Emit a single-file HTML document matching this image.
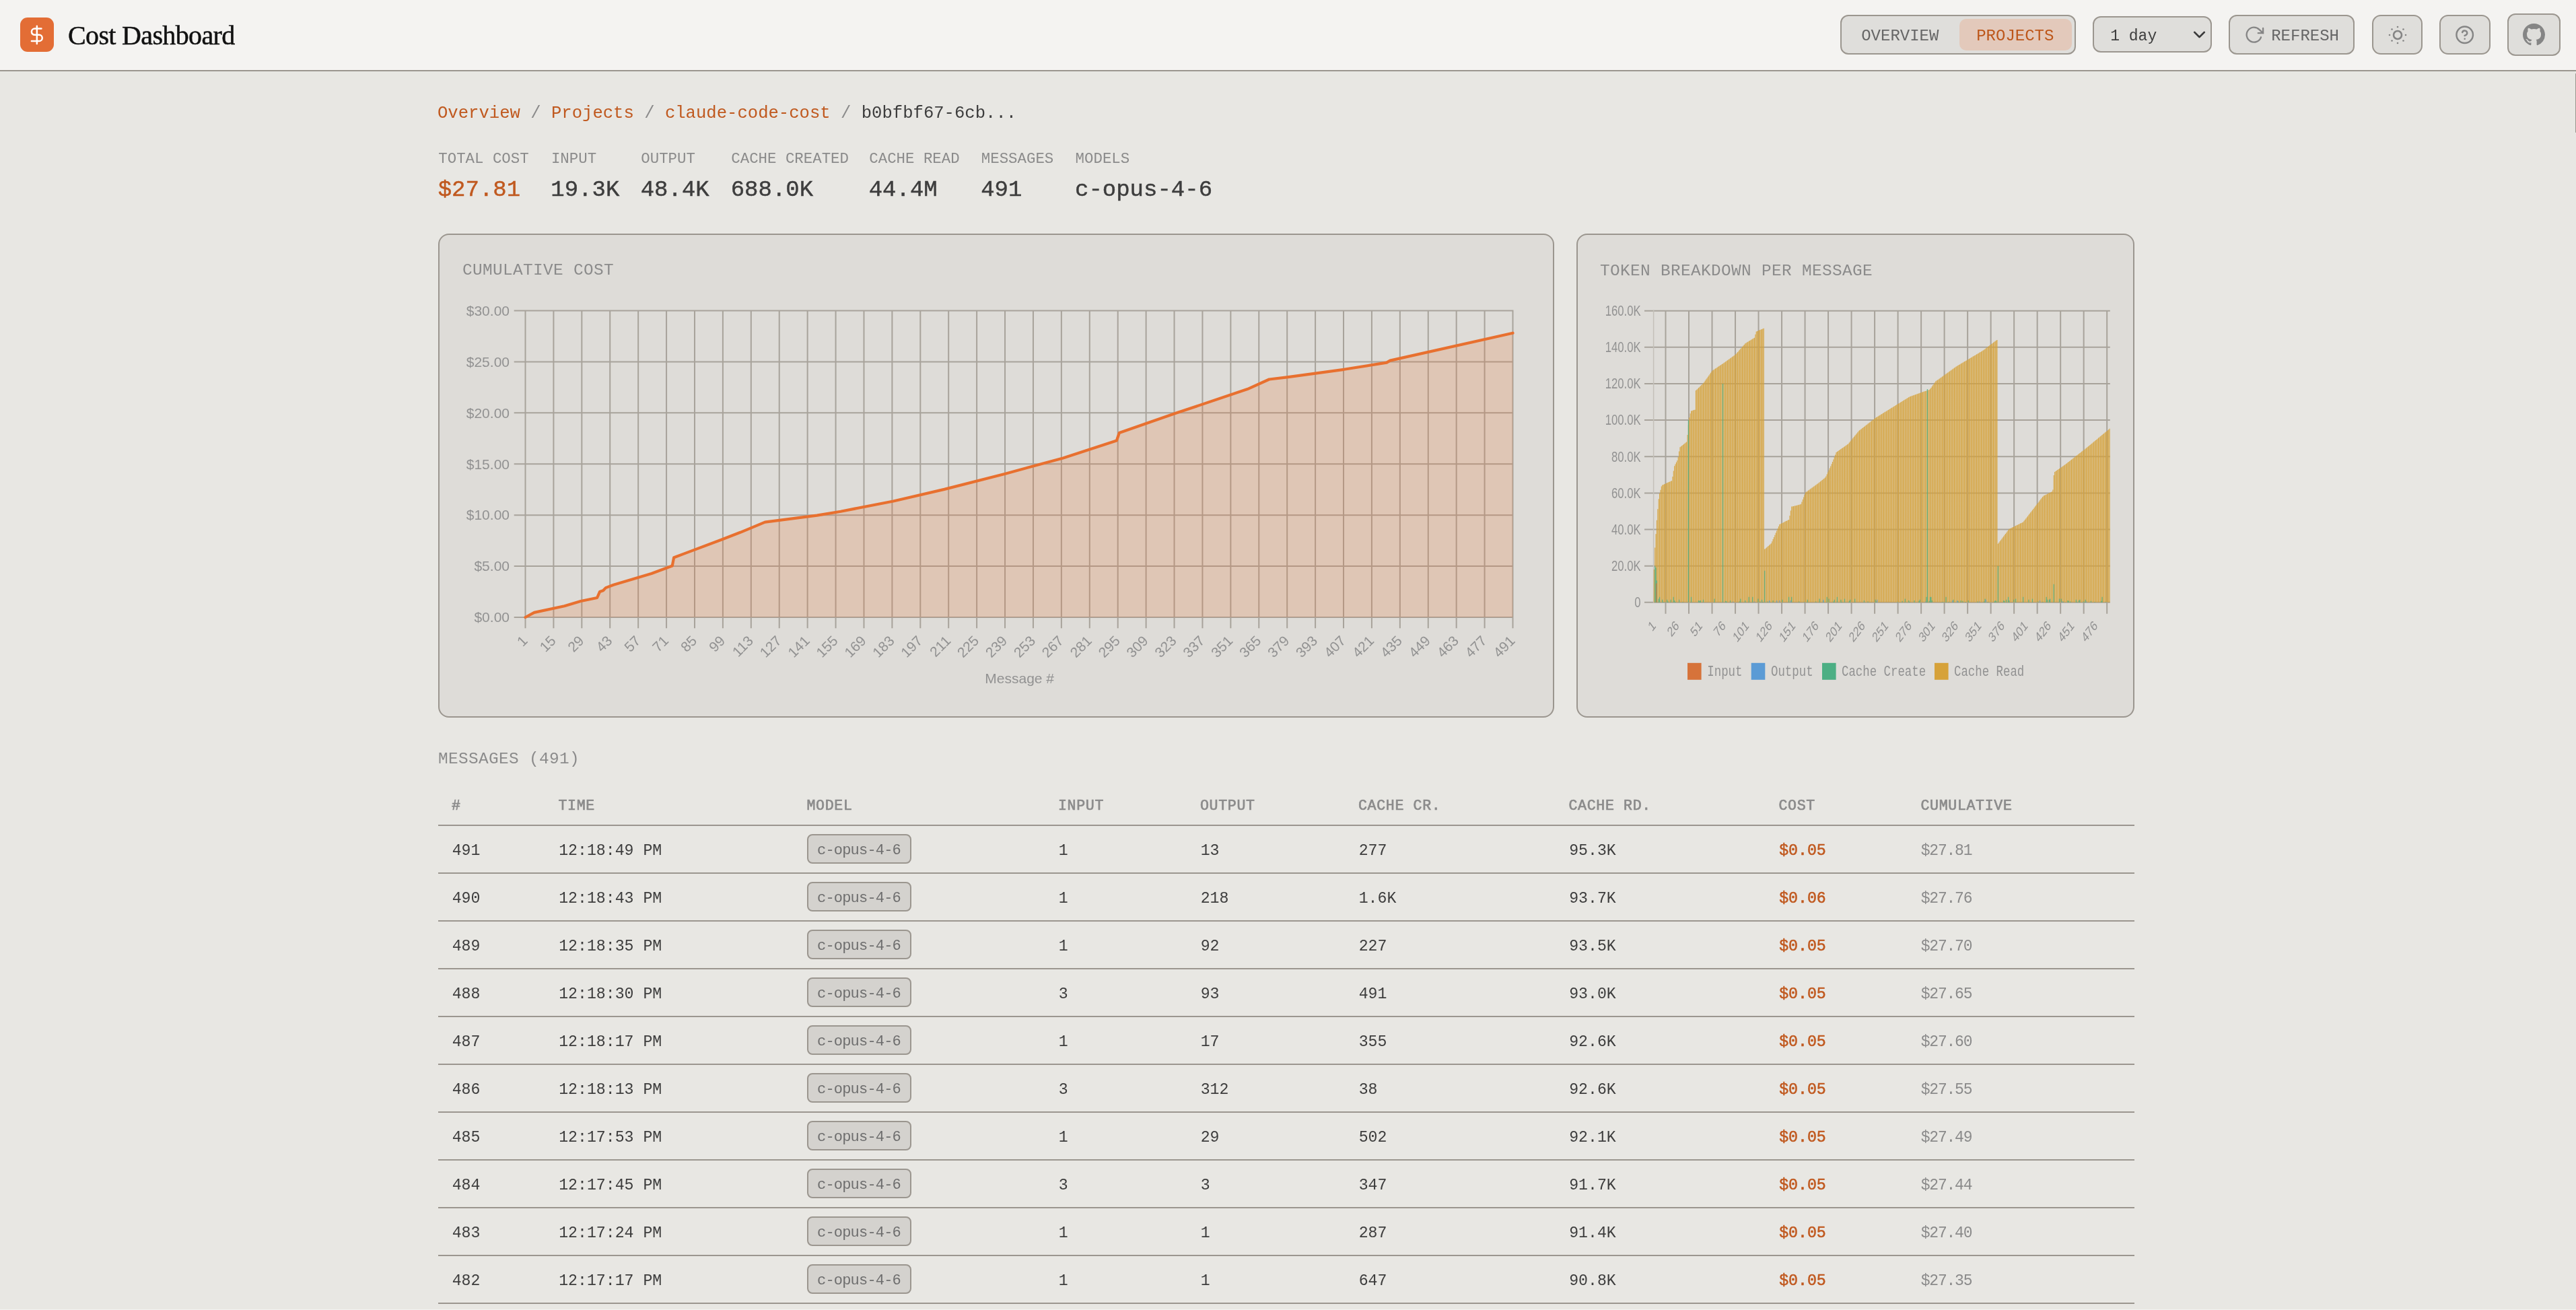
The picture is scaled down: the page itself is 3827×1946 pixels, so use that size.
<!DOCTYPE html><html><head><meta charset="utf-8"><style>
html,body{margin:0;padding:0;}
body{width:3827px;height:1946px;overflow:hidden;position:relative;background:#e8e7e3;}
.t{position:absolute;white-space:pre;}
.r{position:absolute;box-sizing:border-box;}
svg{position:absolute;overflow:visible;}
</style></head><body><div id="wrap" style="position:absolute;left:0;top:0;width:3827px;height:1946px;will-change:transform">
<div class="r" style="left:0px;top:0px;width:3827px;height:106px;background:#f4f3f1;border-radius:0px;"></div>
<div class="r" style="left:0px;top:104px;width:3827px;height:2px;background:#9b968f;border-radius:0px;"></div>
<div class="r" style="left:30px;top:26px;width:50px;height:51px;background:#e36d35;border-radius:11px;"></div>
<svg style="left:38.7px;top:35.7px" width="31.7" height="31.7" viewBox="0 0 24 24" fill="none" stroke="#fff" stroke-width="1.9" stroke-linecap="round" stroke-linejoin="round"><line x1="12" x2="12" y1="2" y2="22"/><path d="M17 5H9.5a3.5 3.5 0 0 0 0 7h5a3.5 3.5 0 0 1 0 7H6"/></svg>
<div class="t" style="left:101.00px;top:32.50px;font:400 40px/40px 'Liberation Serif', serif;letter-spacing:-0.65px;color:#111;-webkit-text-stroke:0.5px #111;">Cost Dashboard</div>
<div class="r" style="left:2734px;top:22px;width:350px;height:59px;background:#dfdedb;border:2px solid #9b968f;border-radius:12px;"></div>
<div class="r" style="left:2911px;top:28px;width:167px;height:47px;background:#e3c9bb;border-radius:10px;"></div>
<div class="t" style="left:2765.20px;top:42.31px;font:400 24px/24px 'Liberation Mono', monospace;letter-spacing:0px;color:#666;">OVERVIEW</div>
<div class="t" style="left:2936.20px;top:42.31px;font:400 24px/24px 'Liberation Mono', monospace;letter-spacing:0px;color:#bd5619;">PROJECTS</div>
<div class="r" style="left:3109px;top:24px;width:177px;height:54px;background:#dfdedb;border:2px solid #9b968f;border-radius:12px;"></div>
<div class="t" style="left:3135.20px;top:42.88px;font:400 23px/23px 'Liberation Mono', monospace;letter-spacing:0px;color:#3d3d3d;">1 day</div>
<svg style="left:3252.5px;top:37.1px" width="29" height="29" viewBox="0 0 24 24" fill="none" stroke="#3a3a3a" stroke-width="2.3" stroke-linecap="round" stroke-linejoin="round"><path d="m6 9 6 6 6-6"/></svg>
<div class="r" style="left:3311px;top:22px;width:187px;height:59px;background:#dfdedb;border:2px solid #9b968f;border-radius:12px;"></div>
<svg style="left:3333.8px;top:37.1px" width="29.3" height="29.3" viewBox="0 0 24 24" fill="none" stroke="#858585" stroke-width="1.9" stroke-linecap="round" stroke-linejoin="miter"><polyline points="23 4 23 10 17 10"/><path d="M20.49 15a9 9 0 1 1-2.12-9.36L23 10"/></svg>
<div class="t" style="left:3374.20px;top:42.31px;font:400 24px/24px 'Liberation Mono', monospace;letter-spacing:0px;color:#666;">REFRESH</div>
<div class="r" style="left:3524px;top:22px;width:75px;height:59px;background:#dfdedb;border:2px solid #9b968f;border-radius:13px;"></div>
<svg style="left:3543.5px;top:33.6px" width="36" height="36" viewBox="0 0 24 24" fill="none" stroke="#858585" stroke-width="1.75" stroke-linecap="round" stroke-linejoin="round"><circle cx="12" cy="12" r="4"/><path d="M12 4h.01"/><path d="M20 12h.01"/><path d="M12 20h.01"/><path d="M4 12h.01"/><path d="M17.657 6.343h.01"/><path d="M17.657 17.657h.01"/><path d="M6.343 17.657h.01"/><path d="M6.343 6.343h.01"/></svg>
<div class="r" style="left:3624px;top:22px;width:76px;height:59px;background:#dfdedb;border:2px solid #9b968f;border-radius:13px;"></div>
<svg style="left:3646.8px;top:36.9px" width="29.4" height="29.4" viewBox="0 0 24 24" fill="none" stroke="#858585" stroke-width="2" stroke-linecap="round" stroke-linejoin="round"><circle cx="12" cy="12" r="10"/><path d="M9.09 9a3 3 0 0 1 5.83 1c0 2-3 3-3 3"/><path d="M12 17h.01"/></svg>
<div class="r" style="left:3725px;top:20px;width:79px;height:63px;background:#dfdedb;border:2px solid #9b968f;border-radius:12px;"></div>
<svg style="left:3748.3px;top:35.2px" width="33" height="33" viewBox="0 0 16 16" fill="#858585"><path d="M8 0C3.58 0 0 3.58 0 8c0 3.54 2.29 6.53 5.47 7.59.4.07.55-.17.55-.38 0-.19-.01-.82-.01-1.49-2.01.37-2.53-.49-2.69-.94-.09-.23-.48-.94-.82-1.13-.28-.15-.68-.52-.01-.53.63-.01 1.08.58 1.23.82.72 1.21 1.87.87 2.33.66.07-.52.28-.87.51-1.07-1.78-.2-3.64-.89-3.64-3.95 0-.87.31-1.59.82-2.15-.08-.2-.36-1.02.08-2.12 0 0 .67-.21 2.2.82.64-.18 1.32-.27 2-.27.68 0 1.36.09 2 .27 1.53-1.04 2.2-.82 2.2-.82.44 1.1.16 1.92.08 2.12.51.56.82 1.27.82 2.15 0 3.07-1.87 3.75-3.65 3.95.29.25.54.73.54 1.48 0 1.07-.01 1.93-.01 2.2 0 .21.15.46.55.38A8.013 8.013 0 0 0 16 8c0-4.42-3.58-8-8-8z"/></svg>
<div class="t" style="left:650.00px;top:156.39px;font:400 25.6px/25.6px 'Liberation Mono', monospace;letter-spacing:0px;color:#c0591f;">Overview</div>
<div class="t" style="left:772.88px;top:156.39px;font:400 25.6px/25.6px 'Liberation Mono', monospace;letter-spacing:0px;color:#8b8b8b;"> / </div>
<div class="t" style="left:818.96px;top:156.39px;font:400 25.6px/25.6px 'Liberation Mono', monospace;letter-spacing:0px;color:#c0591f;">Projects</div>
<div class="t" style="left:941.84px;top:156.39px;font:400 25.6px/25.6px 'Liberation Mono', monospace;letter-spacing:0px;color:#8b8b8b;"> / </div>
<div class="t" style="left:987.92px;top:156.39px;font:400 25.6px/25.6px 'Liberation Mono', monospace;letter-spacing:0px;color:#c0591f;">claude-code-cost</div>
<div class="t" style="left:1233.68px;top:156.39px;font:400 25.6px/25.6px 'Liberation Mono', monospace;letter-spacing:0px;color:#8b8b8b;"> / </div>
<div class="t" style="left:1279.76px;top:156.39px;font:400 25.6px/25.6px 'Liberation Mono', monospace;letter-spacing:0px;color:#3d3d3d;">b0bfbf67-6cb...</div>
<div class="t" style="left:651.30px;top:225.14px;font:400 22.4px/22.4px 'Liberation Mono', monospace;letter-spacing:0px;color:#8b8b8b;">TOTAL COST</div>
<div class="t" style="left:650.70px;top:265.45px;font:400 34px/34px 'Liberation Mono', monospace;letter-spacing:0px;color:#c0591f;-webkit-text-stroke:0.45px #c0591f;">$27.81</div>
<div class="t" style="left:818.90px;top:225.14px;font:400 22.4px/22.4px 'Liberation Mono', monospace;letter-spacing:0px;color:#8b8b8b;">INPUT</div>
<div class="t" style="left:818.30px;top:265.45px;font:400 34px/34px 'Liberation Mono', monospace;letter-spacing:0px;color:#3d3d3d;-webkit-text-stroke:0.45px #3d3d3d;">19.3K</div>
<div class="t" style="left:952.30px;top:225.14px;font:400 22.4px/22.4px 'Liberation Mono', monospace;letter-spacing:0px;color:#8b8b8b;">OUTPUT</div>
<div class="t" style="left:951.70px;top:265.45px;font:400 34px/34px 'Liberation Mono', monospace;letter-spacing:0px;color:#3d3d3d;-webkit-text-stroke:0.45px #3d3d3d;">48.4K</div>
<div class="t" style="left:1086.30px;top:225.14px;font:400 22.4px/22.4px 'Liberation Mono', monospace;letter-spacing:0px;color:#8b8b8b;">CACHE CREATED</div>
<div class="t" style="left:1085.70px;top:265.45px;font:400 34px/34px 'Liberation Mono', monospace;letter-spacing:0px;color:#3d3d3d;-webkit-text-stroke:0.45px #3d3d3d;">688.0K</div>
<div class="t" style="left:1291.30px;top:225.14px;font:400 22.4px/22.4px 'Liberation Mono', monospace;letter-spacing:0px;color:#8b8b8b;">CACHE READ</div>
<div class="t" style="left:1290.70px;top:265.45px;font:400 34px/34px 'Liberation Mono', monospace;letter-spacing:0px;color:#3d3d3d;-webkit-text-stroke:0.45px #3d3d3d;">44.4M</div>
<div class="t" style="left:1457.80px;top:225.14px;font:400 22.4px/22.4px 'Liberation Mono', monospace;letter-spacing:0px;color:#8b8b8b;">MESSAGES</div>
<div class="t" style="left:1457.20px;top:265.45px;font:400 34px/34px 'Liberation Mono', monospace;letter-spacing:0px;color:#3d3d3d;-webkit-text-stroke:0.45px #3d3d3d;">491</div>
<div class="t" style="left:1597.60px;top:225.14px;font:400 22.4px/22.4px 'Liberation Mono', monospace;letter-spacing:0px;color:#8b8b8b;">MODELS</div>
<div class="t" style="left:1597.00px;top:265.45px;font:400 34px/34px 'Liberation Mono', monospace;letter-spacing:0px;color:#3d3d3d;-webkit-text-stroke:0.45px #3d3d3d;">c-opus-4-6</div>
<div class="r" style="left:651px;top:347px;width:1658px;height:719px;background:#dedcd8;border:2px solid #9b968f;border-radius:16px;"></div>
<div class="r" style="left:2342px;top:347px;width:829px;height:719px;background:#dedcd8;border:2px solid #9b968f;border-radius:16px;"></div>
<div class="t" style="left:687.00px;top:390.31px;font:400 24.4px/24.4px 'Liberation Mono', monospace;letter-spacing:0.36px;color:#8b8b8b;">CUMULATIVE COST</div>
<div class="t" style="left:2377.00px;top:390.51px;font:400 24.4px/24.4px 'Liberation Mono', monospace;letter-spacing:0.36px;color:#8b8b8b;">TOKEN BREAKDOWN PER MESSAGE</div>
<svg style="left:0;top:0" width="3827" height="1946" viewBox="0 0 3827 1946"><path d="M763.7 917.00H2248.5 M763.7 841.08H2248.5 M763.7 765.17H2248.5 M763.7 689.25H2248.5 M763.7 613.33H2248.5 M763.7 537.42H2248.5 M763.7 461.50H2248.5 M780.50 460.5V933.3 M822.41 460.5V933.3 M864.33 460.5V933.3 M906.24 460.5V933.3 M948.16 460.5V933.3 M990.07 460.5V933.3 M1031.99 460.5V933.3 M1073.90 460.5V933.3 M1115.81 460.5V933.3 M1157.73 460.5V933.3 M1199.64 460.5V933.3 M1241.56 460.5V933.3 M1283.47 460.5V933.3 M1325.39 460.5V933.3 M1367.30 460.5V933.3 M1409.21 460.5V933.3 M1451.13 460.5V933.3 M1493.04 460.5V933.3 M1534.96 460.5V933.3 M1576.87 460.5V933.3 M1618.79 460.5V933.3 M1660.70 460.5V933.3 M1702.61 460.5V933.3 M1744.53 460.5V933.3 M1786.44 460.5V933.3 M1828.36 460.5V933.3 M1870.27 460.5V933.3 M1912.19 460.5V933.3 M1954.10 460.5V933.3 M1996.01 460.5V933.3 M2037.93 460.5V933.3 M2079.84 460.5V933.3 M2121.76 460.5V933.3 M2163.67 460.5V933.3 M2205.59 460.5V933.3 M2247.50 460.5V933.3" stroke="#a8a39b" stroke-width="2" fill="none"/>
<polygon points="780.50,917.00 780.50,917.00 793.67,909.86 838.58,900.30 862.83,893.01 887.08,888.00 890.97,879.04 896.06,877.22 899.96,873.12 911.63,868.72 967.92,852.02 998.75,840.48 1001.15,828.18 1073.00,801.30 1099.95,790.83 1136.47,775.64 1155.63,773.06 1213.71,765.62 1249.04,759.70 1327.18,744.52 1402.93,726.90 1493.64,703.67 1579.27,680.44 1658.90,654.48 1662.80,643.09 1746.03,614.09 1853.21,578.11 1885.54,563.53 1911.89,560.34 1996.61,548.80 2060.08,538.63 2065.17,535.59 2247.50,494.75 2247.50,917.00" fill="rgba(232,112,47,0.2)"/>
<polyline points="780.50,917.00 793.67,909.86 838.58,900.30 862.83,893.01 887.08,888.00 890.97,879.04 896.06,877.22 899.96,873.12 911.63,868.72 967.92,852.02 998.75,840.48 1001.15,828.18 1073.00,801.30 1099.95,790.83 1136.47,775.64 1155.63,773.06 1213.71,765.62 1249.04,759.70 1327.18,744.52 1402.93,726.90 1493.64,703.67 1579.27,680.44 1658.90,654.48 1662.80,643.09 1746.03,614.09 1853.21,578.11 1885.54,563.53 1911.89,560.34 1996.61,548.80 2060.08,538.63 2065.17,535.59 2247.50,494.75" fill="none" stroke="#e8702f" stroke-width="4.2" stroke-linejoin="round" stroke-linecap="round"/>
<text x="757" y="924.30" text-anchor="end" font-family="'Liberation Sans', sans-serif" font-size="21" fill="#929292">$0.00</text>
<text x="757" y="848.38" text-anchor="end" font-family="'Liberation Sans', sans-serif" font-size="21" fill="#929292">$5.00</text>
<text x="757" y="772.47" text-anchor="end" font-family="'Liberation Sans', sans-serif" font-size="21" fill="#929292">$10.00</text>
<text x="757" y="696.55" text-anchor="end" font-family="'Liberation Sans', sans-serif" font-size="21" fill="#929292">$15.00</text>
<text x="757" y="620.63" text-anchor="end" font-family="'Liberation Sans', sans-serif" font-size="21" fill="#929292">$20.00</text>
<text x="757" y="544.72" text-anchor="end" font-family="'Liberation Sans', sans-serif" font-size="21" fill="#929292">$25.00</text>
<text x="757" y="468.80" text-anchor="end" font-family="'Liberation Sans', sans-serif" font-size="21" fill="#929292">$30.00</text>
<text transform="translate(779.70,948.0) rotate(-45)" text-anchor="end" dominant-baseline="central" font-family="'Liberation Sans', sans-serif" font-size="21" fill="#929292">1</text>
<text transform="translate(821.61,948.0) rotate(-45)" text-anchor="end" dominant-baseline="central" font-family="'Liberation Sans', sans-serif" font-size="21" fill="#929292">15</text>
<text transform="translate(863.53,948.0) rotate(-45)" text-anchor="end" dominant-baseline="central" font-family="'Liberation Sans', sans-serif" font-size="21" fill="#929292">29</text>
<text transform="translate(905.44,948.0) rotate(-45)" text-anchor="end" dominant-baseline="central" font-family="'Liberation Sans', sans-serif" font-size="21" fill="#929292">43</text>
<text transform="translate(947.36,948.0) rotate(-45)" text-anchor="end" dominant-baseline="central" font-family="'Liberation Sans', sans-serif" font-size="21" fill="#929292">57</text>
<text transform="translate(989.27,948.0) rotate(-45)" text-anchor="end" dominant-baseline="central" font-family="'Liberation Sans', sans-serif" font-size="21" fill="#929292">71</text>
<text transform="translate(1031.19,948.0) rotate(-45)" text-anchor="end" dominant-baseline="central" font-family="'Liberation Sans', sans-serif" font-size="21" fill="#929292">85</text>
<text transform="translate(1073.10,948.0) rotate(-45)" text-anchor="end" dominant-baseline="central" font-family="'Liberation Sans', sans-serif" font-size="21" fill="#929292">99</text>
<text transform="translate(1115.01,948.0) rotate(-45)" text-anchor="end" dominant-baseline="central" font-family="'Liberation Sans', sans-serif" font-size="21" fill="#929292">113</text>
<text transform="translate(1156.93,948.0) rotate(-45)" text-anchor="end" dominant-baseline="central" font-family="'Liberation Sans', sans-serif" font-size="21" fill="#929292">127</text>
<text transform="translate(1198.84,948.0) rotate(-45)" text-anchor="end" dominant-baseline="central" font-family="'Liberation Sans', sans-serif" font-size="21" fill="#929292">141</text>
<text transform="translate(1240.76,948.0) rotate(-45)" text-anchor="end" dominant-baseline="central" font-family="'Liberation Sans', sans-serif" font-size="21" fill="#929292">155</text>
<text transform="translate(1282.67,948.0) rotate(-45)" text-anchor="end" dominant-baseline="central" font-family="'Liberation Sans', sans-serif" font-size="21" fill="#929292">169</text>
<text transform="translate(1324.59,948.0) rotate(-45)" text-anchor="end" dominant-baseline="central" font-family="'Liberation Sans', sans-serif" font-size="21" fill="#929292">183</text>
<text transform="translate(1366.50,948.0) rotate(-45)" text-anchor="end" dominant-baseline="central" font-family="'Liberation Sans', sans-serif" font-size="21" fill="#929292">197</text>
<text transform="translate(1408.41,948.0) rotate(-45)" text-anchor="end" dominant-baseline="central" font-family="'Liberation Sans', sans-serif" font-size="21" fill="#929292">211</text>
<text transform="translate(1450.33,948.0) rotate(-45)" text-anchor="end" dominant-baseline="central" font-family="'Liberation Sans', sans-serif" font-size="21" fill="#929292">225</text>
<text transform="translate(1492.24,948.0) rotate(-45)" text-anchor="end" dominant-baseline="central" font-family="'Liberation Sans', sans-serif" font-size="21" fill="#929292">239</text>
<text transform="translate(1534.16,948.0) rotate(-45)" text-anchor="end" dominant-baseline="central" font-family="'Liberation Sans', sans-serif" font-size="21" fill="#929292">253</text>
<text transform="translate(1576.07,948.0) rotate(-45)" text-anchor="end" dominant-baseline="central" font-family="'Liberation Sans', sans-serif" font-size="21" fill="#929292">267</text>
<text transform="translate(1617.99,948.0) rotate(-45)" text-anchor="end" dominant-baseline="central" font-family="'Liberation Sans', sans-serif" font-size="21" fill="#929292">281</text>
<text transform="translate(1659.90,948.0) rotate(-45)" text-anchor="end" dominant-baseline="central" font-family="'Liberation Sans', sans-serif" font-size="21" fill="#929292">295</text>
<text transform="translate(1701.81,948.0) rotate(-45)" text-anchor="end" dominant-baseline="central" font-family="'Liberation Sans', sans-serif" font-size="21" fill="#929292">309</text>
<text transform="translate(1743.73,948.0) rotate(-45)" text-anchor="end" dominant-baseline="central" font-family="'Liberation Sans', sans-serif" font-size="21" fill="#929292">323</text>
<text transform="translate(1785.64,948.0) rotate(-45)" text-anchor="end" dominant-baseline="central" font-family="'Liberation Sans', sans-serif" font-size="21" fill="#929292">337</text>
<text transform="translate(1827.56,948.0) rotate(-45)" text-anchor="end" dominant-baseline="central" font-family="'Liberation Sans', sans-serif" font-size="21" fill="#929292">351</text>
<text transform="translate(1869.47,948.0) rotate(-45)" text-anchor="end" dominant-baseline="central" font-family="'Liberation Sans', sans-serif" font-size="21" fill="#929292">365</text>
<text transform="translate(1911.39,948.0) rotate(-45)" text-anchor="end" dominant-baseline="central" font-family="'Liberation Sans', sans-serif" font-size="21" fill="#929292">379</text>
<text transform="translate(1953.30,948.0) rotate(-45)" text-anchor="end" dominant-baseline="central" font-family="'Liberation Sans', sans-serif" font-size="21" fill="#929292">393</text>
<text transform="translate(1995.21,948.0) rotate(-45)" text-anchor="end" dominant-baseline="central" font-family="'Liberation Sans', sans-serif" font-size="21" fill="#929292">407</text>
<text transform="translate(2037.13,948.0) rotate(-45)" text-anchor="end" dominant-baseline="central" font-family="'Liberation Sans', sans-serif" font-size="21" fill="#929292">421</text>
<text transform="translate(2079.04,948.0) rotate(-45)" text-anchor="end" dominant-baseline="central" font-family="'Liberation Sans', sans-serif" font-size="21" fill="#929292">435</text>
<text transform="translate(2120.96,948.0) rotate(-45)" text-anchor="end" dominant-baseline="central" font-family="'Liberation Sans', sans-serif" font-size="21" fill="#929292">449</text>
<text transform="translate(2162.87,948.0) rotate(-45)" text-anchor="end" dominant-baseline="central" font-family="'Liberation Sans', sans-serif" font-size="21" fill="#929292">463</text>
<text transform="translate(2204.79,948.0) rotate(-45)" text-anchor="end" dominant-baseline="central" font-family="'Liberation Sans', sans-serif" font-size="21" fill="#929292">477</text>
<text transform="translate(2246.70,948.0) rotate(-45)" text-anchor="end" dominant-baseline="central" font-family="'Liberation Sans', sans-serif" font-size="21" fill="#929292">491</text>
<text x="1514.7" y="1015" text-anchor="middle" font-family="'Liberation Sans', sans-serif" font-size="21" fill="#929292">Message #</text><path d="M2443 894.80H3134.8 M2443 840.66H3134.8 M2443 786.52H3134.8 M2443 732.39H3134.8 M2443 678.25H3134.8 M2443 624.11H3134.8 M2443 569.97H3134.8 M2443 515.84H3134.8 M2443 461.70H3134.8 M2474.50 460.7V911.8 M2509.01 460.7V911.8 M2543.52 460.7V911.8 M2578.03 460.7V911.8 M2612.54 460.7V911.8 M2647.05 460.7V911.8 M2681.56 460.7V911.8 M2716.07 460.7V911.8 M2750.58 460.7V911.8 M2785.09 460.7V911.8 M2819.60 460.7V911.8 M2854.11 460.7V911.8 M2888.62 460.7V911.8 M2923.13 460.7V911.8 M2957.64 460.7V911.8 M2992.15 460.7V911.8 M3026.66 460.7V911.8 M3061.17 460.7V911.8 M3095.68 460.7V911.8 M3130.19 460.7V911.8" stroke="#a8a39b" stroke-width="2" fill="none"/>
<path d="M2456.6 460.7V895.8" stroke="#c4c0b9" stroke-width="1.5" fill="none"/>
<path d="M2456.75 894.80v-48.72h1.08v48.72zM2458.13 894.80v-81.21h1.08v81.21zM2459.51 894.80v-101.57h1.08v101.57zM2460.89 894.80v-121.93h1.08v121.93zM2462.28 894.80v-138.55h1.08v138.55zM2463.66 894.80v-153.57h1.08v153.57zM2465.04 894.80v-161.74h1.08v161.74zM2466.42 894.80v-166.98h1.08v166.98zM2467.80 894.80v-172.21h1.08v172.21zM2469.18 894.80v-174.23h1.08v174.23zM2470.56 894.80v-174.87h1.08v174.87zM2471.94 894.80v-175.51h1.08v175.51zM2473.33 894.80v-176.15h1.08v176.15zM2474.71 894.80v-176.79h1.08v176.79zM2476.09 894.80v-177.43h1.08v177.43zM2477.47 894.80v-178.07h1.08v178.07zM2478.85 894.80v-178.71h1.08v178.71zM2480.23 894.80v-179.35h1.08v179.35zM2481.61 894.80v-179.99h1.08v179.99zM2482.99 894.80v-180.63h1.08v180.63zM2484.38 894.80v-186.73h1.08v186.73zM2485.76 894.80v-195.18h1.08v195.18zM2487.14 894.80v-202.49h1.08v202.49zM2488.52 894.80v-205.27h1.08v205.27zM2489.90 894.80v-208.04h1.08v208.04zM2491.28 894.80v-210.82h1.08v210.82zM2492.66 894.80v-215.84h1.08v215.84zM2494.04 894.80v-224.22h1.08v224.22zM2495.43 894.80v-230.43h1.08v230.43zM2496.81 894.80v-231.57h1.08v231.57zM2498.19 894.80v-232.71h1.08v232.71zM2499.57 894.80v-233.85h1.08v233.85zM2500.95 894.80v-234.99h1.08v234.99zM2502.33 894.80v-236.12h1.08v236.12zM2503.71 894.80v-237.26h1.08v237.26zM2505.09 894.80v-238.40h1.08v238.40zM2506.48 894.80v-248.88h1.08v248.88zM2507.86 894.80v-263.36h1.08v263.36zM2509.24 894.80v-274.48h1.08v274.48zM2510.62 894.80v-280.57h1.08v280.57zM2512.00 894.80v-284.39h1.08v284.39zM2513.38 894.80v-284.82h1.08v284.82zM2514.76 894.80v-285.26h1.08v285.26zM2516.14 894.80v-285.69h1.08v285.69zM2517.53 894.80v-286.12h1.08v286.12zM2518.91 894.80v-314.68h1.08v314.68zM2520.29 894.80v-316.05h1.08v316.05zM2521.67 894.80v-317.42h1.08v317.42zM2523.05 894.80v-318.78h1.08v318.78zM2524.43 894.80v-320.15h1.08v320.15zM2525.81 894.80v-321.52h1.08v321.52zM2527.20 894.80v-322.89h1.08v322.89zM2528.58 894.80v-324.26h1.08v324.26zM2529.96 894.80v-325.63h1.08v325.63zM2531.34 894.80v-327.24h1.08v327.24zM2532.72 894.80v-329.22h1.08v329.22zM2534.10 894.80v-331.19h1.08v331.19zM2535.48 894.80v-333.17h1.08v333.17zM2536.86 894.80v-335.15h1.08v335.15zM2538.25 894.80v-337.12h1.08v337.12zM2539.63 894.80v-339.10h1.08v339.10zM2541.01 894.80v-341.08h1.08v341.08zM2542.39 894.80v-343.06h1.08v343.06zM2543.77 894.80v-344.50h1.08v344.50zM2545.15 894.80v-345.42h1.08v345.42zM2546.53 894.80v-346.34h1.08v346.34zM2547.91 894.80v-347.26h1.08v347.26zM2549.30 894.80v-348.17h1.08v348.17zM2550.68 894.80v-349.09h1.08v349.09zM2552.06 894.80v-350.01h1.08v350.01zM2553.44 894.80v-350.93h1.08v350.93zM2554.82 894.80v-351.85h1.08v351.85zM2556.20 894.80v-352.76h1.08v352.76zM2557.58 894.80v-353.68h1.08v353.68zM2558.96 894.80v-354.60h1.08v354.60zM2560.35 894.80v-355.61h1.08v355.61zM2561.73 894.80v-356.61h1.08v356.61zM2563.11 894.80v-357.62h1.08v357.62zM2564.49 894.80v-358.62h1.08v358.62zM2565.87 894.80v-359.63h1.08v359.63zM2567.25 894.80v-360.63h1.08v360.63zM2568.63 894.80v-361.64h1.08v361.64zM2570.01 894.80v-362.64h1.08v362.64zM2571.40 894.80v-363.65h1.08v363.65zM2572.78 894.80v-364.65h1.08v364.65zM2574.16 894.80v-365.66h1.08v365.66zM2575.54 894.80v-366.67h1.08v366.67zM2576.92 894.80v-367.67h1.08v367.67zM2578.30 894.80v-368.68h1.08v368.68zM2579.68 894.80v-370.26h1.08v370.26zM2581.06 894.80v-371.84h1.08v371.84zM2582.45 894.80v-373.42h1.08v373.42zM2583.83 894.80v-375.00h1.08v375.00zM2585.21 894.80v-376.58h1.08v376.58zM2586.59 894.80v-378.16h1.08v378.16zM2587.97 894.80v-379.75h1.08v379.75zM2589.35 894.80v-381.33h1.08v381.33zM2590.73 894.80v-382.91h1.08v382.91zM2592.11 894.80v-384.49h1.08v384.49zM2593.50 894.80v-385.41h1.08v385.41zM2594.88 894.80v-386.26h1.08v386.26zM2596.26 894.80v-387.11h1.08v387.11zM2597.64 894.80v-387.96h1.08v387.96zM2599.02 894.80v-388.81h1.08v388.81zM2600.40 894.80v-389.66h1.08v389.66zM2601.78 894.80v-390.51h1.08v390.51zM2603.16 894.80v-391.36h1.08v391.36zM2604.55 894.80v-392.20h1.08v392.20zM2605.93 894.80v-393.05h1.08v393.05zM2607.31 894.80v-397.97h1.08v397.97zM2608.69 894.80v-402.22h1.08v402.22zM2610.07 894.80v-402.83h1.08v402.83zM2611.45 894.80v-403.45h1.08v403.45zM2612.83 894.80v-404.06h1.08v404.06zM2614.21 894.80v-404.68h1.08v404.68zM2615.60 894.80v-405.29h1.08v405.29zM2616.98 894.80v-405.91h1.08v405.91zM2618.36 894.80v-406.52h1.08v406.52zM2619.74 894.80v-407.14h1.08v407.14zM2621.12 894.80v-79.04h1.08v79.04zM2622.50 894.80v-80.15h1.08v80.15zM2623.88 894.80v-81.39h1.08v81.39zM2625.26 894.80v-82.63h1.08v82.63zM2626.65 894.80v-83.87h1.08v83.87zM2628.03 894.80v-85.10h1.08v85.10zM2629.41 894.80v-86.34h1.08v86.34zM2630.79 894.80v-87.58h1.08v87.58zM2632.17 894.80v-90.55h1.08v90.55zM2633.55 894.80v-93.71h1.08v93.71zM2634.93 894.80v-96.88h1.08v96.88zM2636.31 894.80v-100.04h1.08v100.04zM2637.70 894.80v-103.20h1.08v103.20zM2639.08 894.80v-106.36h1.08v106.36zM2640.46 894.80v-109.53h1.08v109.53zM2641.84 894.80v-112.69h1.08v112.69zM2643.22 894.80v-115.85h1.08v115.85zM2644.60 894.80v-116.54h1.08v116.54zM2645.98 894.80v-117.23h1.08v117.23zM2647.36 894.80v-117.92h1.08v117.92zM2648.75 894.80v-118.61h1.08v118.61zM2650.13 894.80v-119.30h1.08v119.30zM2651.51 894.80v-119.99h1.08v119.99zM2652.89 894.80v-120.68h1.08v120.68zM2654.27 894.80v-121.37h1.08v121.37zM2655.65 894.80v-122.06h1.08v122.06zM2657.03 894.80v-122.75h1.08v122.75zM2658.41 894.80v-128.81h1.08v128.81zM2659.80 894.80v-136.20h1.08v136.20zM2661.18 894.80v-142.18h1.08v142.18zM2662.56 894.80v-142.53h1.08v142.53zM2663.94 894.80v-142.88h1.08v142.88zM2665.32 894.80v-143.23h1.08v143.23zM2666.70 894.80v-143.57h1.08v143.57zM2668.08 894.80v-143.92h1.08v143.92zM2669.47 894.80v-144.27h1.08v144.27zM2670.85 894.80v-144.62h1.08v144.62zM2672.23 894.80v-144.97h1.08v144.97zM2673.61 894.80v-145.32h1.08v145.32zM2674.99 894.80v-145.97h1.08v145.97zM2676.37 894.80v-149.42h1.08v149.42zM2677.75 894.80v-152.87h1.08v152.87zM2679.13 894.80v-156.32h1.08v156.32zM2680.52 894.80v-159.77h1.08v159.77zM2681.90 894.80v-163.22h1.08v163.22zM2683.28 894.80v-164.23h1.08v164.23zM2684.66 894.80v-165.24h1.08v165.24zM2686.04 894.80v-166.24h1.08v166.24zM2687.42 894.80v-167.25h1.08v167.25zM2688.80 894.80v-168.25h1.08v168.25zM2690.18 894.80v-169.26h1.08v169.26zM2691.57 894.80v-170.26h1.08v170.26zM2692.95 894.80v-171.27h1.08v171.27zM2694.33 894.80v-172.27h1.08v172.27zM2695.71 894.80v-173.28h1.08v173.28zM2697.09 894.80v-174.28h1.08v174.28zM2698.47 894.80v-175.29h1.08v175.29zM2699.85 894.80v-176.29h1.08v176.29zM2701.23 894.80v-177.30h1.08v177.30zM2702.62 894.80v-178.44h1.08v178.44zM2704.00 894.80v-179.58h1.08v179.58zM2705.38 894.80v-180.72h1.08v180.72zM2706.76 894.80v-181.86h1.08v181.86zM2708.14 894.80v-183.00h1.08v183.00zM2709.52 894.80v-184.14h1.08v184.14zM2710.90 894.80v-185.28h1.08v185.28zM2712.28 894.80v-187.18h1.08v187.18zM2713.67 894.80v-190.23h1.08v190.23zM2715.05 894.80v-193.27h1.08v193.27zM2716.43 894.80v-196.32h1.08v196.32zM2717.81 894.80v-199.36h1.08v199.36zM2719.19 894.80v-202.41h1.08v202.41zM2720.57 894.80v-205.45h1.08v205.45zM2721.95 894.80v-208.90h1.08v208.90zM2723.33 894.80v-212.35h1.08v212.35zM2724.72 894.80v-215.80h1.08v215.80zM2726.10 894.80v-219.25h1.08v219.25zM2727.48 894.80v-222.70h1.08v222.70zM2728.86 894.80v-223.91h1.08v223.91zM2730.24 894.80v-224.87h1.08v224.87zM2731.62 894.80v-225.83h1.08v225.83zM2733.00 894.80v-226.79h1.08v226.79zM2734.38 894.80v-227.75h1.08v227.75zM2735.77 894.80v-228.71h1.08v228.71zM2737.15 894.80v-229.66h1.08v229.66zM2738.53 894.80v-230.62h1.08v230.62zM2739.91 894.80v-231.58h1.08v231.58zM2741.29 894.80v-232.54h1.08v232.54zM2742.67 894.80v-233.50h1.08v233.50zM2744.05 894.80v-234.46h1.08v234.46zM2745.43 894.80v-235.57h1.08v235.57zM2746.82 894.80v-237.26h1.08v237.26zM2748.20 894.80v-238.96h1.08v238.96zM2749.58 894.80v-240.65h1.08v240.65zM2750.96 894.80v-242.35h1.08v242.35zM2752.34 894.80v-244.04h1.08v244.04zM2753.72 894.80v-245.73h1.08v245.73zM2755.10 894.80v-247.43h1.08v247.43zM2756.48 894.80v-249.12h1.08v249.12zM2757.87 894.80v-250.82h1.08v250.82zM2759.25 894.80v-252.51h1.08v252.51zM2760.63 894.80v-254.21h1.08v254.21zM2762.01 894.80v-255.47h1.08v255.47zM2763.39 894.80v-256.55h1.08v256.55zM2764.77 894.80v-257.63h1.08v257.63zM2766.15 894.80v-258.71h1.08v258.71zM2767.53 894.80v-259.79h1.08v259.79zM2768.92 894.80v-260.87h1.08v260.87zM2770.30 894.80v-261.95h1.08v261.95zM2771.68 894.80v-263.03h1.08v263.03zM2773.06 894.80v-264.11h1.08v264.11zM2774.44 894.80v-265.19h1.08v265.19zM2775.82 894.80v-266.27h1.08v266.27zM2777.20 894.80v-267.35h1.08v267.35zM2778.58 894.80v-268.43h1.08v268.43zM2779.97 894.80v-269.51h1.08v269.51zM2781.35 894.80v-270.59h1.08v270.59zM2782.73 894.80v-271.67h1.08v271.67zM2784.11 894.80v-272.75h1.08v272.75zM2785.49 894.80v-273.83h1.08v273.83zM2786.87 894.80v-274.71h1.08v274.71zM2788.25 894.80v-275.57h1.08v275.57zM2789.63 894.80v-276.42h1.08v276.42zM2791.02 894.80v-277.28h1.08v277.28zM2792.40 894.80v-278.14h1.08v278.14zM2793.78 894.80v-279.00h1.08v279.00zM2795.16 894.80v-279.86h1.08v279.86zM2796.54 894.80v-280.72h1.08v280.72zM2797.92 894.80v-281.57h1.08v281.57zM2799.30 894.80v-282.43h1.08v282.43zM2800.69 894.80v-283.29h1.08v283.29zM2802.07 894.80v-284.15h1.08v284.15zM2803.45 894.80v-285.01h1.08v285.01zM2804.83 894.80v-285.87h1.08v285.87zM2806.21 894.80v-286.72h1.08v286.72zM2807.59 894.80v-287.58h1.08v287.58zM2808.97 894.80v-288.44h1.08v288.44zM2810.35 894.80v-289.30h1.08v289.30zM2811.74 894.80v-290.16h1.08v290.16zM2813.12 894.80v-291.02h1.08v291.02zM2814.50 894.80v-291.87h1.08v291.87zM2815.88 894.80v-292.73h1.08v292.73zM2817.26 894.80v-293.59h1.08v293.59zM2818.64 894.80v-294.45h1.08v294.45zM2820.02 894.80v-295.31h1.08v295.31zM2821.40 894.80v-296.17h1.08v296.17zM2822.79 894.80v-297.02h1.08v297.02zM2824.17 894.80v-297.88h1.08v297.88zM2825.55 894.80v-298.74h1.08v298.74zM2826.93 894.80v-299.60h1.08v299.60zM2828.31 894.80v-300.46h1.08v300.46zM2829.69 894.80v-301.31h1.08v301.31zM2831.07 894.80v-302.17h1.08v302.17zM2832.45 894.80v-303.03h1.08v303.03zM2833.84 894.80v-303.89h1.08v303.89zM2835.22 894.80v-304.75h1.08v304.75zM2836.60 894.80v-305.61h1.08v305.61zM2837.98 894.80v-306.09h1.08v306.09zM2839.36 894.80v-306.58h1.08v306.58zM2840.74 894.80v-307.07h1.08v307.07zM2842.12 894.80v-307.56h1.08v307.56zM2843.50 894.80v-308.05h1.08v308.05zM2844.89 894.80v-308.54h1.08v308.54zM2846.27 894.80v-309.03h1.08v309.03zM2847.65 894.80v-309.52h1.08v309.52zM2849.03 894.80v-310.00h1.08v310.00zM2850.41 894.80v-310.49h1.08v310.49zM2851.79 894.80v-310.98h1.08v310.98zM2853.17 894.80v-311.47h1.08v311.47zM2854.55 894.80v-311.96h1.08v311.96zM2855.94 894.80v-312.45h1.08v312.45zM2857.32 894.80v-312.94h1.08v312.94zM2858.70 894.80v-313.43h1.08v313.43zM2860.08 894.80v-313.91h1.08v313.91zM2861.46 894.80v-314.40h1.08v314.40zM2862.84 894.80v-314.89h1.08v314.89zM2864.22 894.80v-315.38h1.08v315.38zM2865.60 894.80v-315.87h1.08v315.87zM2866.99 894.80v-316.94h1.08v316.94zM2868.37 894.80v-318.87h1.08v318.87zM2869.75 894.80v-320.80h1.08v320.80zM2871.13 894.80v-322.74h1.08v322.74zM2872.51 894.80v-324.67h1.08v324.67zM2873.89 894.80v-326.60h1.08v326.60zM2875.27 894.80v-328.44h1.08v328.44zM2876.65 894.80v-329.43h1.08v329.43zM2878.04 894.80v-330.42h1.08v330.42zM2879.42 894.80v-331.41h1.08v331.41zM2880.80 894.80v-332.40h1.08v332.40zM2882.18 894.80v-333.39h1.08v333.39zM2883.56 894.80v-334.37h1.08v334.37zM2884.94 894.80v-335.36h1.08v335.36zM2886.32 894.80v-336.35h1.08v336.35zM2887.70 894.80v-337.34h1.08v337.34zM2889.09 894.80v-338.33h1.08v338.33zM2890.47 894.80v-339.32h1.08v339.32zM2891.85 894.80v-340.31h1.08v340.31zM2893.23 894.80v-341.29h1.08v341.29zM2894.61 894.80v-342.28h1.08v342.28zM2895.99 894.80v-343.27h1.08v343.27zM2897.37 894.80v-344.26h1.08v344.26zM2898.75 894.80v-345.25h1.08v345.25zM2900.14 894.80v-346.24h1.08v346.24zM2901.52 894.80v-347.23h1.08v347.23zM2902.90 894.80v-348.21h1.08v348.21zM2904.28 894.80v-349.20h1.08v349.20zM2905.66 894.80v-350.19h1.08v350.19zM2907.04 894.80v-351.16h1.08v351.16zM2908.42 894.80v-351.99h1.08v351.99zM2909.80 894.80v-352.81h1.08v352.81zM2911.19 894.80v-353.64h1.08v353.64zM2912.57 894.80v-354.46h1.08v354.46zM2913.95 894.80v-355.29h1.08v355.29zM2915.33 894.80v-356.11h1.08v356.11zM2916.71 894.80v-356.94h1.08v356.94zM2918.09 894.80v-357.76h1.08v357.76zM2919.47 894.80v-358.59h1.08v358.59zM2920.85 894.80v-359.41h1.08v359.41zM2922.24 894.80v-360.24h1.08v360.24zM2923.62 894.80v-361.06h1.08v361.06zM2925.00 894.80v-361.88h1.08v361.88zM2926.38 894.80v-362.71h1.08v362.71zM2927.76 894.80v-363.53h1.08v363.53zM2929.14 894.80v-364.36h1.08v364.36zM2930.52 894.80v-365.18h1.08v365.18zM2931.91 894.80v-366.01h1.08v366.01zM2933.29 894.80v-366.83h1.08v366.83zM2934.67 894.80v-367.66h1.08v367.66zM2936.05 894.80v-368.48h1.08v368.48zM2937.43 894.80v-369.31h1.08v369.31zM2938.81 894.80v-370.13h1.08v370.13zM2940.19 894.80v-370.96h1.08v370.96zM2941.57 894.80v-371.78h1.08v371.78zM2942.96 894.80v-372.61h1.08v372.61zM2944.34 894.80v-373.43h1.08v373.43zM2945.72 894.80v-374.30h1.08v374.30zM2947.10 894.80v-375.36h1.08v375.36zM2948.48 894.80v-376.42h1.08v376.42zM2949.86 894.80v-377.48h1.08v377.48zM2951.24 894.80v-378.55h1.08v378.55zM2952.62 894.80v-379.61h1.08v379.61zM2954.01 894.80v-380.67h1.08v380.67zM2955.39 894.80v-381.73h1.08v381.73zM2956.77 894.80v-382.79h1.08v382.79zM2958.15 894.80v-383.85h1.08v383.85zM2959.53 894.80v-384.91h1.08v384.91zM2960.91 894.80v-385.97h1.08v385.97zM2962.29 894.80v-387.03h1.08v387.03zM2963.67 894.80v-388.09h1.08v388.09zM2965.06 894.80v-389.15h1.08v389.15zM2966.44 894.80v-389.79h1.08v389.79zM2967.82 894.80v-87.00h1.08v87.00zM2969.20 894.80v-88.85h1.08v88.85zM2970.58 894.80v-90.70h1.08v90.70zM2971.96 894.80v-92.55h1.08v92.55zM2973.34 894.80v-94.40h1.08v94.40zM2974.72 894.80v-96.25h1.08v96.25zM2976.11 894.80v-98.09h1.08v98.09zM2977.49 894.80v-99.94h1.08v99.94zM2978.87 894.80v-101.79h1.08v101.79zM2980.25 894.80v-103.64h1.08v103.64zM2981.63 894.80v-105.49h1.08v105.49zM2983.01 894.80v-107.34h1.08v107.34zM2984.39 894.80v-108.95h1.08v108.95zM2985.77 894.80v-109.64h1.08v109.64zM2987.16 894.80v-110.33h1.08v110.33zM2988.54 894.80v-111.02h1.08v111.02zM2989.92 894.80v-111.71h1.08v111.71zM2991.30 894.80v-112.40h1.08v112.40zM2992.68 894.80v-113.09h1.08v113.09zM2994.06 894.80v-113.78h1.08v113.78zM2995.44 894.80v-114.47h1.08v114.47zM2996.82 894.80v-115.16h1.08v115.16zM2998.21 894.80v-115.85h1.08v115.85zM2999.59 894.80v-116.54h1.08v116.54zM3000.97 894.80v-117.23h1.08v117.23zM3002.35 894.80v-117.92h1.08v117.92zM3003.73 894.80v-118.61h1.08v118.61zM3005.11 894.80v-119.30h1.08v119.30zM3006.49 894.80v-120.99h1.08v120.99zM3007.87 894.80v-122.78h1.08v122.78zM3009.26 894.80v-124.57h1.08v124.57zM3010.64 894.80v-126.36h1.08v126.36zM3012.02 894.80v-128.15h1.08v128.15zM3013.40 894.80v-129.95h1.08v129.95zM3014.78 894.80v-131.74h1.08v131.74zM3016.16 894.80v-133.53h1.08v133.53zM3017.54 894.80v-135.32h1.08v135.32zM3018.92 894.80v-137.11h1.08v137.11zM3020.31 894.80v-138.91h1.08v138.91zM3021.69 894.80v-140.70h1.08v140.70zM3023.07 894.80v-142.49h1.08v142.49zM3024.45 894.80v-144.28h1.08v144.28zM3025.83 894.80v-146.07h1.08v146.07zM3027.21 894.80v-147.87h1.08v147.87zM3028.59 894.80v-149.66h1.08v149.66zM3029.97 894.80v-151.45h1.08v151.45zM3031.36 894.80v-153.24h1.08v153.24zM3032.74 894.80v-155.04h1.08v155.04zM3034.12 894.80v-156.83h1.08v156.83zM3035.50 894.80v-158.29h1.08v158.29zM3036.88 894.80v-158.98h1.08v158.98zM3038.26 894.80v-159.67h1.08v159.67zM3039.64 894.80v-160.36h1.08v160.36zM3041.02 894.80v-161.05h1.08v161.05zM3042.41 894.80v-161.74h1.08v161.74zM3043.79 894.80v-162.43h1.08v162.43zM3045.17 894.80v-163.12h1.08v163.12zM3046.55 894.80v-163.81h1.08v163.81zM3047.93 894.80v-164.50h1.08v164.50zM3049.31 894.80v-167.26h1.08v167.26zM3050.69 894.80v-188.71h1.08v188.71zM3052.07 894.80v-193.78h1.08v193.78zM3053.46 894.80v-194.76h1.08v194.76zM3054.84 894.80v-195.75h1.08v195.75zM3056.22 894.80v-196.73h1.08v196.73zM3057.60 894.80v-197.71h1.08v197.71zM3058.98 894.80v-198.69h1.08v198.69zM3060.36 894.80v-199.67h1.08v199.67zM3061.74 894.80v-200.65h1.08v200.65zM3063.12 894.80v-201.63h1.08v201.63zM3064.51 894.80v-202.61h1.08v202.61zM3065.89 894.80v-203.59h1.08v203.59zM3067.27 894.80v-204.57h1.08v204.57zM3068.65 894.80v-205.56h1.08v205.56zM3070.03 894.80v-206.64h1.08v206.64zM3071.41 894.80v-207.72h1.08v207.72zM3072.79 894.80v-208.80h1.08v208.80zM3074.18 894.80v-209.88h1.08v209.88zM3075.56 894.80v-210.96h1.08v210.96zM3076.94 894.80v-212.04h1.08v212.04zM3078.32 894.80v-213.12h1.08v213.12zM3079.70 894.80v-214.20h1.08v214.20zM3081.08 894.80v-215.28h1.08v215.28zM3082.46 894.80v-216.36h1.08v216.36zM3083.84 894.80v-217.44h1.08v217.44zM3085.23 894.80v-218.52h1.08v218.52zM3086.61 894.80v-219.60h1.08v219.60zM3087.99 894.80v-220.69h1.08v220.69zM3089.37 894.80v-221.77h1.08v221.77zM3090.75 894.80v-222.85h1.08v222.85zM3092.13 894.80v-223.93h1.08v223.93zM3093.51 894.80v-225.01h1.08v225.01zM3094.89 894.80v-226.09h1.08v226.09zM3096.28 894.80v-227.17h1.08v227.17zM3097.66 894.80v-228.25h1.08v228.25zM3099.04 894.80v-229.33h1.08v229.33zM3100.42 894.80v-230.43h1.08v230.43zM3101.80 894.80v-231.58h1.08v231.58zM3103.18 894.80v-232.72h1.08v232.72zM3104.56 894.80v-233.87h1.08v233.87zM3105.94 894.80v-235.02h1.08v235.02zM3107.33 894.80v-236.17h1.08v236.17zM3108.71 894.80v-237.31h1.08v237.31zM3110.09 894.80v-238.46h1.08v238.46zM3111.47 894.80v-239.61h1.08v239.61zM3112.85 894.80v-240.75h1.08v240.75zM3114.23 894.80v-241.90h1.08v241.90zM3115.61 894.80v-243.05h1.08v243.05zM3116.99 894.80v-244.20h1.08v244.20zM3118.38 894.80v-245.34h1.08v245.34zM3119.76 894.80v-246.49h1.08v246.49zM3121.14 894.80v-247.64h1.08v247.64zM3122.52 894.80v-248.79h1.08v248.79zM3123.90 894.80v-249.93h1.08v249.93zM3125.28 894.80v-251.08h1.08v251.08zM3126.66 894.80v-252.23h1.08v252.23zM3128.04 894.80v-253.38h1.08v253.38zM3129.43 894.80v-254.52h1.08v254.52zM3130.81 894.80v-255.67h1.08v255.67zM3132.19 894.80v-256.82h1.08v256.82zM3133.57 894.80v-257.97h1.08v257.97z" fill="rgba(214,162,58,0.92)"/>
<path d="M2458.07 894.80v-54.14h1.2v54.14zM2459.45 894.80v-51.43h1.2v51.43zM2460.83 894.80v-32.48h1.2v32.48zM2507.80 894.80v-270.69h1.2v270.69zM2558.90 894.80v-324.82h1.2v324.82zM2621.06 894.80v-47.10h1.2v47.10zM2862.78 894.80v-316.70h1.2v316.70zM2967.76 894.80v-54.14h1.2v54.14zM3050.63 894.80v-27.07h1.2v27.07zM2463.60 894.80v-5.41h1.2v5.41zM2464.98 894.80v-8.12h1.2v8.12zM2469.12 894.80v-4.06h1.2v4.06zM2470.50 894.80v-0.81h1.2v0.81zM2473.27 894.80v-0.81h1.2v0.81zM2476.03 894.80v-4.06h1.2v4.06zM2477.41 894.80v-1.35h1.2v1.35zM2481.55 894.80v-4.06h1.2v4.06zM2485.70 894.80v-8.12h1.2v8.12zM2487.08 894.80v-2.71h1.2v2.71zM2488.46 894.80v-0.81h1.2v0.81zM2493.98 894.80v-4.06h1.2v4.06zM2499.51 894.80v-0.81h1.2v0.81zM2511.94 894.80v-8.12h1.2v8.12zM2522.99 894.80v-2.71h1.2v2.71zM2524.37 894.80v-2.17h1.2v2.17zM2525.75 894.80v-2.71h1.2v2.71zM2529.90 894.80v-4.06h1.2v4.06zM2546.47 894.80v-5.41h1.2v5.41zM2563.05 894.80v-2.17h1.2v2.17zM2564.43 894.80v-1.35h1.2v1.35zM2569.95 894.80v-2.71h1.2v2.71zM2583.77 894.80v-1.35h1.2v1.35zM2585.15 894.80v-5.41h1.2v5.41zM2592.05 894.80v-2.71h1.2v2.71zM2597.58 894.80v-8.12h1.2v8.12zM2603.10 894.80v-8.12h1.2v8.12zM2611.39 894.80v-5.41h1.2v5.41zM2614.15 894.80v-1.35h1.2v1.35zM2616.92 894.80v-4.06h1.2v4.06zM2618.30 894.80v-0.81h1.2v0.81zM2625.20 894.80v-1.35h1.2v1.35zM2627.97 894.80v-2.17h1.2v2.17zM2633.49 894.80v-2.71h1.2v2.71zM2639.02 894.80v-0.81h1.2v0.81zM2647.30 894.80v-4.06h1.2v4.06zM2656.97 894.80v-8.12h1.2v8.12zM2661.12 894.80v-8.12h1.2v8.12zM2672.17 894.80v-1.35h1.2v1.35zM2680.46 894.80v-0.81h1.2v0.81zM2684.60 894.80v-4.06h1.2v4.06zM2697.03 894.80v-1.35h1.2v1.35zM2702.56 894.80v-5.41h1.2v5.41zM2708.08 894.80v-2.71h1.2v2.71zM2713.61 894.80v-8.12h1.2v8.12zM2716.37 894.80v-5.41h1.2v5.41zM2723.27 894.80v-1.35h1.2v1.35zM2724.66 894.80v-4.06h1.2v4.06zM2728.80 894.80v-8.12h1.2v8.12zM2734.32 894.80v-4.06h1.2v4.06zM2735.71 894.80v-0.81h1.2v0.81zM2739.85 894.80v-5.41h1.2v5.41zM2746.76 894.80v-2.17h1.2v2.17zM2748.14 894.80v-4.06h1.2v4.06zM2755.04 894.80v-5.41h1.2v5.41zM2768.86 894.80v-2.71h1.2v2.71zM2774.38 894.80v-1.35h1.2v1.35zM2785.43 894.80v-4.06h1.2v4.06zM2786.81 894.80v-1.35h1.2v1.35zM2818.58 894.80v-0.81h1.2v0.81zM2825.49 894.80v-2.17h1.2v2.17zM2829.63 894.80v-5.41h1.2v5.41zM2835.16 894.80v-2.71h1.2v2.71zM2836.54 894.80v-0.81h1.2v0.81zM2843.44 894.80v-2.71h1.2v2.71zM2850.35 894.80v-2.17h1.2v2.17zM2851.73 894.80v-4.06h1.2v4.06zM2861.40 894.80v-8.12h1.2v8.12zM2865.54 894.80v-2.17h1.2v2.17zM2866.93 894.80v-8.12h1.2v8.12zM2868.31 894.80v-8.12h1.2v8.12zM2869.69 894.80v-2.71h1.2v2.71zM2884.88 894.80v-0.81h1.2v0.81zM2887.64 894.80v-0.81h1.2v0.81zM2890.41 894.80v-8.12h1.2v8.12zM2894.55 894.80v-0.81h1.2v0.81zM2901.46 894.80v-4.06h1.2v4.06zM2908.36 894.80v-2.17h1.2v2.17zM2912.51 894.80v-2.71h1.2v2.71zM2915.27 894.80v-2.17h1.2v2.17zM2919.41 894.80v-0.81h1.2v0.81zM2923.56 894.80v-2.71h1.2v2.71zM2937.37 894.80v-1.35h1.2v1.35zM2947.04 894.80v-1.35h1.2v1.35zM2948.42 894.80v-5.41h1.2v5.41zM2952.56 894.80v-0.81h1.2v0.81zM2962.23 894.80v-1.35h1.2v1.35zM2963.61 894.80v-2.71h1.2v2.71zM2965.00 894.80v-2.17h1.2v2.17zM2976.05 894.80v-2.71h1.2v2.71zM2977.43 894.80v-2.17h1.2v2.17zM2980.19 894.80v-4.06h1.2v4.06zM2982.95 894.80v-8.12h1.2v8.12zM2984.33 894.80v-2.71h1.2v2.71zM2991.24 894.80v-4.06h1.2v4.06zM2994.00 894.80v-5.41h1.2v5.41zM3005.05 894.80v-8.12h1.2v8.12zM3013.34 894.80v-4.06h1.2v4.06zM3018.86 894.80v-5.41h1.2v5.41zM3027.15 894.80v-1.35h1.2v1.35zM3034.06 894.80v-0.81h1.2v0.81zM3039.58 894.80v-8.12h1.2v8.12zM3040.96 894.80v-4.06h1.2v4.06zM3043.73 894.80v-4.06h1.2v4.06zM3045.11 894.80v-5.41h1.2v5.41zM3058.92 894.80v-5.41h1.2v5.41zM3061.68 894.80v-5.41h1.2v5.41zM3064.45 894.80v-1.35h1.2v1.35zM3071.35 894.80v-2.71h1.2v2.71zM3072.73 894.80v-2.17h1.2v2.17zM3075.50 894.80v-1.35h1.2v1.35zM3083.78 894.80v-4.06h1.2v4.06zM3085.17 894.80v-0.81h1.2v0.81zM3087.93 894.80v-2.71h1.2v2.71zM3089.31 894.80v-4.06h1.2v4.06zM3094.83 894.80v-1.35h1.2v1.35zM3096.22 894.80v-0.81h1.2v0.81zM3097.60 894.80v-4.06h1.2v4.06zM3105.88 894.80v-2.17h1.2v2.17zM3111.41 894.80v-0.81h1.2v0.81zM3121.08 894.80v-2.17h1.2v2.17zM3122.46 894.80v-8.12h1.2v8.12zM3127.98 894.80v-0.81h1.2v0.81z" fill="rgba(76,175,132,0.85)"/>
<path d="M2574.10 894.80v-1.35h1.2v1.35zM2605.87 894.80v-1.35h1.2v1.35zM2627.97 894.80v-2.71h1.2v2.71zM2639.02 894.80v-2.71h1.2v2.71zM2643.16 894.80v-2.71h1.2v2.71zM2659.74 894.80v-2.71h1.2v2.71zM2708.08 894.80v-4.06h1.2v4.06zM2788.19 894.80v-4.06h1.2v4.06zM2860.02 894.80v-1.35h1.2v1.35zM2900.08 894.80v-2.71h1.2v2.71zM2906.98 894.80v-2.71h1.2v2.71zM2940.13 894.80v-1.35h1.2v1.35zM2949.80 894.80v-4.06h1.2v4.06zM3029.91 894.80v-2.71h1.2v2.71zM3063.06 894.80v-1.35h1.2v1.35zM3098.98 894.80v-1.35h1.2v1.35z" fill="rgba(91,155,213,0.8)"/>
<path d="M2460.20 894.80v-28.42h1.2v28.42z" fill="rgba(214,115,58,0.9)"/>
<text transform="translate(2437.6,902.10) scale(0.76,1)" text-anchor="end" font-family="'Liberation Sans', sans-serif" font-size="22" fill="#929292">0</text>
<text transform="translate(2437.6,847.96) scale(0.76,1)" text-anchor="end" font-family="'Liberation Sans', sans-serif" font-size="22" fill="#929292">20.0K</text>
<text transform="translate(2437.6,793.82) scale(0.76,1)" text-anchor="end" font-family="'Liberation Sans', sans-serif" font-size="22" fill="#929292">40.0K</text>
<text transform="translate(2437.6,739.69) scale(0.76,1)" text-anchor="end" font-family="'Liberation Sans', sans-serif" font-size="22" fill="#929292">60.0K</text>
<text transform="translate(2437.6,685.55) scale(0.76,1)" text-anchor="end" font-family="'Liberation Sans', sans-serif" font-size="22" fill="#929292">80.0K</text>
<text transform="translate(2437.6,631.41) scale(0.76,1)" text-anchor="end" font-family="'Liberation Sans', sans-serif" font-size="22" fill="#929292">100.0K</text>
<text transform="translate(2437.6,577.27) scale(0.76,1)" text-anchor="end" font-family="'Liberation Sans', sans-serif" font-size="22" fill="#929292">120.0K</text>
<text transform="translate(2437.6,523.14) scale(0.76,1)" text-anchor="end" font-family="'Liberation Sans', sans-serif" font-size="22" fill="#929292">140.0K</text>
<text transform="translate(2437.6,469.00) scale(0.76,1)" text-anchor="end" font-family="'Liberation Sans', sans-serif" font-size="22" fill="#929292">160.0K</text>
<text transform="translate(2457.29,926.0) scale(0.76,1) rotate(-45)" text-anchor="end" dominant-baseline="central" font-family="'Liberation Sans', sans-serif" font-size="20.5" fill="#929292">1</text>
<text transform="translate(2491.82,926.0) scale(0.76,1) rotate(-45)" text-anchor="end" dominant-baseline="central" font-family="'Liberation Sans', sans-serif" font-size="20.5" fill="#929292">26</text>
<text transform="translate(2526.35,926.0) scale(0.76,1) rotate(-45)" text-anchor="end" dominant-baseline="central" font-family="'Liberation Sans', sans-serif" font-size="20.5" fill="#929292">51</text>
<text transform="translate(2560.89,926.0) scale(0.76,1) rotate(-45)" text-anchor="end" dominant-baseline="central" font-family="'Liberation Sans', sans-serif" font-size="20.5" fill="#929292">76</text>
<text transform="translate(2595.42,926.0) scale(0.76,1) rotate(-45)" text-anchor="end" dominant-baseline="central" font-family="'Liberation Sans', sans-serif" font-size="20.5" fill="#929292">101</text>
<text transform="translate(2629.95,926.0) scale(0.76,1) rotate(-45)" text-anchor="end" dominant-baseline="central" font-family="'Liberation Sans', sans-serif" font-size="20.5" fill="#929292">126</text>
<text transform="translate(2664.48,926.0) scale(0.76,1) rotate(-45)" text-anchor="end" dominant-baseline="central" font-family="'Liberation Sans', sans-serif" font-size="20.5" fill="#929292">151</text>
<text transform="translate(2699.01,926.0) scale(0.76,1) rotate(-45)" text-anchor="end" dominant-baseline="central" font-family="'Liberation Sans', sans-serif" font-size="20.5" fill="#929292">176</text>
<text transform="translate(2733.54,926.0) scale(0.76,1) rotate(-45)" text-anchor="end" dominant-baseline="central" font-family="'Liberation Sans', sans-serif" font-size="20.5" fill="#929292">201</text>
<text transform="translate(2768.07,926.0) scale(0.76,1) rotate(-45)" text-anchor="end" dominant-baseline="central" font-family="'Liberation Sans', sans-serif" font-size="20.5" fill="#929292">226</text>
<text transform="translate(2802.61,926.0) scale(0.76,1) rotate(-45)" text-anchor="end" dominant-baseline="central" font-family="'Liberation Sans', sans-serif" font-size="20.5" fill="#929292">251</text>
<text transform="translate(2837.14,926.0) scale(0.76,1) rotate(-45)" text-anchor="end" dominant-baseline="central" font-family="'Liberation Sans', sans-serif" font-size="20.5" fill="#929292">276</text>
<text transform="translate(2871.67,926.0) scale(0.76,1) rotate(-45)" text-anchor="end" dominant-baseline="central" font-family="'Liberation Sans', sans-serif" font-size="20.5" fill="#929292">301</text>
<text transform="translate(2906.20,926.0) scale(0.76,1) rotate(-45)" text-anchor="end" dominant-baseline="central" font-family="'Liberation Sans', sans-serif" font-size="20.5" fill="#929292">326</text>
<text transform="translate(2940.73,926.0) scale(0.76,1) rotate(-45)" text-anchor="end" dominant-baseline="central" font-family="'Liberation Sans', sans-serif" font-size="20.5" fill="#929292">351</text>
<text transform="translate(2975.26,926.0) scale(0.76,1) rotate(-45)" text-anchor="end" dominant-baseline="central" font-family="'Liberation Sans', sans-serif" font-size="20.5" fill="#929292">376</text>
<text transform="translate(3009.80,926.0) scale(0.76,1) rotate(-45)" text-anchor="end" dominant-baseline="central" font-family="'Liberation Sans', sans-serif" font-size="20.5" fill="#929292">401</text>
<text transform="translate(3044.33,926.0) scale(0.76,1) rotate(-45)" text-anchor="end" dominant-baseline="central" font-family="'Liberation Sans', sans-serif" font-size="20.5" fill="#929292">426</text>
<text transform="translate(3078.86,926.0) scale(0.76,1) rotate(-45)" text-anchor="end" dominant-baseline="central" font-family="'Liberation Sans', sans-serif" font-size="20.5" fill="#929292">451</text>
<text transform="translate(3113.39,926.0) scale(0.76,1) rotate(-45)" text-anchor="end" dominant-baseline="central" font-family="'Liberation Sans', sans-serif" font-size="20.5" fill="#929292">476</text>
<rect x="2507" y="984.8" width="20.6" height="25" fill="#d6733a"/>
<text transform="translate(2536.3,1003.5) scale(1,1.3)" font-family="'Liberation Mono', monospace" font-size="17.4" fill="#929292">Input</text>
<rect x="2601.7" y="984.8" width="20.6" height="25" fill="#5b9bd5"/>
<text transform="translate(2631.0,1003.5) scale(1,1.3)" font-family="'Liberation Mono', monospace" font-size="17.4" fill="#929292">Output</text>
<rect x="2707" y="984.8" width="20.6" height="25" fill="#4caf84"/>
<text transform="translate(2736.0,1003.5) scale(1,1.3)" font-family="'Liberation Mono', monospace" font-size="17.4" fill="#929292">Cache Create</text>
<rect x="2874" y="984.8" width="20.6" height="25" fill="#d6a23a"/>
<text transform="translate(2903.0,1003.5) scale(1,1.3)" font-family="'Liberation Mono', monospace" font-size="17.4" fill="#929292">Cache Read</text></svg>
<div class="r" style="left:3825.5px;top:109px;width:1.5px;height:88px;background:#9b968f;border-radius:1px;"></div>
<div class="r" style="left:0px;top:1945px;width:3827px;height:1px;background:#f3f3f1;border-radius:0px;"></div>
<div class="t" style="left:651.00px;top:1115.71px;font:400 24.4px/24.4px 'Liberation Mono', monospace;letter-spacing:0.36px;color:#8b8b8b;">MESSAGES (491)</div>
<div class="t" style="left:671.00px;top:1187.05px;font:400 21.6px/21.6px 'Liberation Mono', monospace;letter-spacing:0.64px;color:#8b8b8b;-webkit-text-stroke:0.7px #8b8b8b;">#</div>
<div class="t" style="left:829.50px;top:1187.05px;font:400 21.6px/21.6px 'Liberation Mono', monospace;letter-spacing:0.64px;color:#8b8b8b;-webkit-text-stroke:0.7px #8b8b8b;">TIME</div>
<div class="t" style="left:1198.50px;top:1187.05px;font:400 21.6px/21.6px 'Liberation Mono', monospace;letter-spacing:0.64px;color:#8b8b8b;-webkit-text-stroke:0.7px #8b8b8b;">MODEL</div>
<div class="t" style="left:1572.00px;top:1187.05px;font:400 21.6px/21.6px 'Liberation Mono', monospace;letter-spacing:0.64px;color:#8b8b8b;-webkit-text-stroke:0.7px #8b8b8b;">INPUT</div>
<div class="t" style="left:1783.00px;top:1187.05px;font:400 21.6px/21.6px 'Liberation Mono', monospace;letter-spacing:0.64px;color:#8b8b8b;-webkit-text-stroke:0.7px #8b8b8b;">OUTPUT</div>
<div class="t" style="left:2018.00px;top:1187.05px;font:400 21.6px/21.6px 'Liberation Mono', monospace;letter-spacing:0.64px;color:#8b8b8b;-webkit-text-stroke:0.7px #8b8b8b;">CACHE CR.</div>
<div class="t" style="left:2330.50px;top:1187.05px;font:400 21.6px/21.6px 'Liberation Mono', monospace;letter-spacing:0.64px;color:#8b8b8b;-webkit-text-stroke:0.7px #8b8b8b;">CACHE RD.</div>
<div class="t" style="left:2642.50px;top:1187.05px;font:400 21.6px/21.6px 'Liberation Mono', monospace;letter-spacing:0.64px;color:#8b8b8b;-webkit-text-stroke:0.7px #8b8b8b;">COST</div>
<div class="t" style="left:2853.50px;top:1187.05px;font:400 21.6px/21.6px 'Liberation Mono', monospace;letter-spacing:0.64px;color:#8b8b8b;-webkit-text-stroke:0.7px #8b8b8b;">CUMULATIVE</div>
<div class="r" style="left:651px;top:1225px;width:2520px;height:2px;background:#9b968f;border-radius:0px;"></div>
<div class="t" style="left:671.70px;top:1252.63px;font:400 23.2px/23.2px 'Liberation Mono', monospace;letter-spacing:0px;color:#3d3d3d;">491</div>
<div class="t" style="left:830.20px;top:1252.63px;font:400 23.2px/23.2px 'Liberation Mono', monospace;letter-spacing:0px;color:#3d3d3d;">12:18:49 PM</div>
<div class="r" style="left:1199px;top:1239px;width:155px;height:44px;background:#d4d2ce;border:2px solid #9b968f;border-radius:8px;"></div>
<div class="t" style="left:1214.00px;top:1252.55px;font:400 22px/22px 'Liberation Mono', monospace;letter-spacing:-0.8px;color:#6e6e6e;">c-opus-4-6</div>
<div class="t" style="left:1572.70px;top:1252.63px;font:400 23.2px/23.2px 'Liberation Mono', monospace;letter-spacing:0px;color:#3d3d3d;">1</div>
<div class="t" style="left:1783.70px;top:1252.63px;font:400 23.2px/23.2px 'Liberation Mono', monospace;letter-spacing:0px;color:#3d3d3d;">13</div>
<div class="t" style="left:2018.70px;top:1252.63px;font:400 23.2px/23.2px 'Liberation Mono', monospace;letter-spacing:0px;color:#3d3d3d;">277</div>
<div class="t" style="left:2331.20px;top:1252.63px;font:400 23.2px/23.2px 'Liberation Mono', monospace;letter-spacing:0px;color:#3d3d3d;">95.3K</div>
<div class="t" style="left:2643.20px;top:1253.03px;font:400 23.2px/23.2px 'Liberation Mono', monospace;letter-spacing:0px;color:#c0591f;-webkit-text-stroke:0.55px #c0591f;">$0.05</div>
<div class="t" style="left:2853.70px;top:1252.78px;font:400 23px/23px 'Liberation Mono', monospace;letter-spacing:-1.2px;color:#8b8b8b;">$27.81</div>
<div class="r" style="left:651px;top:1296px;width:2520px;height:2px;background:#9b968f;border-radius:0px;"></div>
<div class="t" style="left:671.70px;top:1323.63px;font:400 23.2px/23.2px 'Liberation Mono', monospace;letter-spacing:0px;color:#3d3d3d;">490</div>
<div class="t" style="left:830.20px;top:1323.63px;font:400 23.2px/23.2px 'Liberation Mono', monospace;letter-spacing:0px;color:#3d3d3d;">12:18:43 PM</div>
<div class="r" style="left:1199px;top:1310px;width:155px;height:44px;background:#d4d2ce;border:2px solid #9b968f;border-radius:8px;"></div>
<div class="t" style="left:1214.00px;top:1323.55px;font:400 22px/22px 'Liberation Mono', monospace;letter-spacing:-0.8px;color:#6e6e6e;">c-opus-4-6</div>
<div class="t" style="left:1572.70px;top:1323.63px;font:400 23.2px/23.2px 'Liberation Mono', monospace;letter-spacing:0px;color:#3d3d3d;">1</div>
<div class="t" style="left:1783.70px;top:1323.63px;font:400 23.2px/23.2px 'Liberation Mono', monospace;letter-spacing:0px;color:#3d3d3d;">218</div>
<div class="t" style="left:2018.70px;top:1323.63px;font:400 23.2px/23.2px 'Liberation Mono', monospace;letter-spacing:0px;color:#3d3d3d;">1.6K</div>
<div class="t" style="left:2331.20px;top:1323.63px;font:400 23.2px/23.2px 'Liberation Mono', monospace;letter-spacing:0px;color:#3d3d3d;">93.7K</div>
<div class="t" style="left:2643.20px;top:1324.03px;font:400 23.2px/23.2px 'Liberation Mono', monospace;letter-spacing:0px;color:#c0591f;-webkit-text-stroke:0.55px #c0591f;">$0.06</div>
<div class="t" style="left:2853.70px;top:1323.78px;font:400 23px/23px 'Liberation Mono', monospace;letter-spacing:-1.2px;color:#8b8b8b;">$27.76</div>
<div class="r" style="left:651px;top:1367px;width:2520px;height:2px;background:#9b968f;border-radius:0px;"></div>
<div class="t" style="left:671.70px;top:1394.63px;font:400 23.2px/23.2px 'Liberation Mono', monospace;letter-spacing:0px;color:#3d3d3d;">489</div>
<div class="t" style="left:830.20px;top:1394.63px;font:400 23.2px/23.2px 'Liberation Mono', monospace;letter-spacing:0px;color:#3d3d3d;">12:18:35 PM</div>
<div class="r" style="left:1199px;top:1381px;width:155px;height:44px;background:#d4d2ce;border:2px solid #9b968f;border-radius:8px;"></div>
<div class="t" style="left:1214.00px;top:1394.55px;font:400 22px/22px 'Liberation Mono', monospace;letter-spacing:-0.8px;color:#6e6e6e;">c-opus-4-6</div>
<div class="t" style="left:1572.70px;top:1394.63px;font:400 23.2px/23.2px 'Liberation Mono', monospace;letter-spacing:0px;color:#3d3d3d;">1</div>
<div class="t" style="left:1783.70px;top:1394.63px;font:400 23.2px/23.2px 'Liberation Mono', monospace;letter-spacing:0px;color:#3d3d3d;">92</div>
<div class="t" style="left:2018.70px;top:1394.63px;font:400 23.2px/23.2px 'Liberation Mono', monospace;letter-spacing:0px;color:#3d3d3d;">227</div>
<div class="t" style="left:2331.20px;top:1394.63px;font:400 23.2px/23.2px 'Liberation Mono', monospace;letter-spacing:0px;color:#3d3d3d;">93.5K</div>
<div class="t" style="left:2643.20px;top:1395.03px;font:400 23.2px/23.2px 'Liberation Mono', monospace;letter-spacing:0px;color:#c0591f;-webkit-text-stroke:0.55px #c0591f;">$0.05</div>
<div class="t" style="left:2853.70px;top:1394.78px;font:400 23px/23px 'Liberation Mono', monospace;letter-spacing:-1.2px;color:#8b8b8b;">$27.70</div>
<div class="r" style="left:651px;top:1438px;width:2520px;height:2px;background:#9b968f;border-radius:0px;"></div>
<div class="t" style="left:671.70px;top:1465.63px;font:400 23.2px/23.2px 'Liberation Mono', monospace;letter-spacing:0px;color:#3d3d3d;">488</div>
<div class="t" style="left:830.20px;top:1465.63px;font:400 23.2px/23.2px 'Liberation Mono', monospace;letter-spacing:0px;color:#3d3d3d;">12:18:30 PM</div>
<div class="r" style="left:1199px;top:1452px;width:155px;height:44px;background:#d4d2ce;border:2px solid #9b968f;border-radius:8px;"></div>
<div class="t" style="left:1214.00px;top:1465.55px;font:400 22px/22px 'Liberation Mono', monospace;letter-spacing:-0.8px;color:#6e6e6e;">c-opus-4-6</div>
<div class="t" style="left:1572.70px;top:1465.63px;font:400 23.2px/23.2px 'Liberation Mono', monospace;letter-spacing:0px;color:#3d3d3d;">3</div>
<div class="t" style="left:1783.70px;top:1465.63px;font:400 23.2px/23.2px 'Liberation Mono', monospace;letter-spacing:0px;color:#3d3d3d;">93</div>
<div class="t" style="left:2018.70px;top:1465.63px;font:400 23.2px/23.2px 'Liberation Mono', monospace;letter-spacing:0px;color:#3d3d3d;">491</div>
<div class="t" style="left:2331.20px;top:1465.63px;font:400 23.2px/23.2px 'Liberation Mono', monospace;letter-spacing:0px;color:#3d3d3d;">93.0K</div>
<div class="t" style="left:2643.20px;top:1466.03px;font:400 23.2px/23.2px 'Liberation Mono', monospace;letter-spacing:0px;color:#c0591f;-webkit-text-stroke:0.55px #c0591f;">$0.05</div>
<div class="t" style="left:2853.70px;top:1465.78px;font:400 23px/23px 'Liberation Mono', monospace;letter-spacing:-1.2px;color:#8b8b8b;">$27.65</div>
<div class="r" style="left:651px;top:1509px;width:2520px;height:2px;background:#9b968f;border-radius:0px;"></div>
<div class="t" style="left:671.70px;top:1536.63px;font:400 23.2px/23.2px 'Liberation Mono', monospace;letter-spacing:0px;color:#3d3d3d;">487</div>
<div class="t" style="left:830.20px;top:1536.63px;font:400 23.2px/23.2px 'Liberation Mono', monospace;letter-spacing:0px;color:#3d3d3d;">12:18:17 PM</div>
<div class="r" style="left:1199px;top:1523px;width:155px;height:44px;background:#d4d2ce;border:2px solid #9b968f;border-radius:8px;"></div>
<div class="t" style="left:1214.00px;top:1536.55px;font:400 22px/22px 'Liberation Mono', monospace;letter-spacing:-0.8px;color:#6e6e6e;">c-opus-4-6</div>
<div class="t" style="left:1572.70px;top:1536.63px;font:400 23.2px/23.2px 'Liberation Mono', monospace;letter-spacing:0px;color:#3d3d3d;">1</div>
<div class="t" style="left:1783.70px;top:1536.63px;font:400 23.2px/23.2px 'Liberation Mono', monospace;letter-spacing:0px;color:#3d3d3d;">17</div>
<div class="t" style="left:2018.70px;top:1536.63px;font:400 23.2px/23.2px 'Liberation Mono', monospace;letter-spacing:0px;color:#3d3d3d;">355</div>
<div class="t" style="left:2331.20px;top:1536.63px;font:400 23.2px/23.2px 'Liberation Mono', monospace;letter-spacing:0px;color:#3d3d3d;">92.6K</div>
<div class="t" style="left:2643.20px;top:1537.03px;font:400 23.2px/23.2px 'Liberation Mono', monospace;letter-spacing:0px;color:#c0591f;-webkit-text-stroke:0.55px #c0591f;">$0.05</div>
<div class="t" style="left:2853.70px;top:1536.78px;font:400 23px/23px 'Liberation Mono', monospace;letter-spacing:-1.2px;color:#8b8b8b;">$27.60</div>
<div class="r" style="left:651px;top:1580px;width:2520px;height:2px;background:#9b968f;border-radius:0px;"></div>
<div class="t" style="left:671.70px;top:1607.63px;font:400 23.2px/23.2px 'Liberation Mono', monospace;letter-spacing:0px;color:#3d3d3d;">486</div>
<div class="t" style="left:830.20px;top:1607.63px;font:400 23.2px/23.2px 'Liberation Mono', monospace;letter-spacing:0px;color:#3d3d3d;">12:18:13 PM</div>
<div class="r" style="left:1199px;top:1594px;width:155px;height:44px;background:#d4d2ce;border:2px solid #9b968f;border-radius:8px;"></div>
<div class="t" style="left:1214.00px;top:1607.55px;font:400 22px/22px 'Liberation Mono', monospace;letter-spacing:-0.8px;color:#6e6e6e;">c-opus-4-6</div>
<div class="t" style="left:1572.70px;top:1607.63px;font:400 23.2px/23.2px 'Liberation Mono', monospace;letter-spacing:0px;color:#3d3d3d;">3</div>
<div class="t" style="left:1783.70px;top:1607.63px;font:400 23.2px/23.2px 'Liberation Mono', monospace;letter-spacing:0px;color:#3d3d3d;">312</div>
<div class="t" style="left:2018.70px;top:1607.63px;font:400 23.2px/23.2px 'Liberation Mono', monospace;letter-spacing:0px;color:#3d3d3d;">38</div>
<div class="t" style="left:2331.20px;top:1607.63px;font:400 23.2px/23.2px 'Liberation Mono', monospace;letter-spacing:0px;color:#3d3d3d;">92.6K</div>
<div class="t" style="left:2643.20px;top:1608.03px;font:400 23.2px/23.2px 'Liberation Mono', monospace;letter-spacing:0px;color:#c0591f;-webkit-text-stroke:0.55px #c0591f;">$0.05</div>
<div class="t" style="left:2853.70px;top:1607.78px;font:400 23px/23px 'Liberation Mono', monospace;letter-spacing:-1.2px;color:#8b8b8b;">$27.55</div>
<div class="r" style="left:651px;top:1651px;width:2520px;height:2px;background:#9b968f;border-radius:0px;"></div>
<div class="t" style="left:671.70px;top:1678.63px;font:400 23.2px/23.2px 'Liberation Mono', monospace;letter-spacing:0px;color:#3d3d3d;">485</div>
<div class="t" style="left:830.20px;top:1678.63px;font:400 23.2px/23.2px 'Liberation Mono', monospace;letter-spacing:0px;color:#3d3d3d;">12:17:53 PM</div>
<div class="r" style="left:1199px;top:1665px;width:155px;height:44px;background:#d4d2ce;border:2px solid #9b968f;border-radius:8px;"></div>
<div class="t" style="left:1214.00px;top:1678.55px;font:400 22px/22px 'Liberation Mono', monospace;letter-spacing:-0.8px;color:#6e6e6e;">c-opus-4-6</div>
<div class="t" style="left:1572.70px;top:1678.63px;font:400 23.2px/23.2px 'Liberation Mono', monospace;letter-spacing:0px;color:#3d3d3d;">1</div>
<div class="t" style="left:1783.70px;top:1678.63px;font:400 23.2px/23.2px 'Liberation Mono', monospace;letter-spacing:0px;color:#3d3d3d;">29</div>
<div class="t" style="left:2018.70px;top:1678.63px;font:400 23.2px/23.2px 'Liberation Mono', monospace;letter-spacing:0px;color:#3d3d3d;">502</div>
<div class="t" style="left:2331.20px;top:1678.63px;font:400 23.2px/23.2px 'Liberation Mono', monospace;letter-spacing:0px;color:#3d3d3d;">92.1K</div>
<div class="t" style="left:2643.20px;top:1679.03px;font:400 23.2px/23.2px 'Liberation Mono', monospace;letter-spacing:0px;color:#c0591f;-webkit-text-stroke:0.55px #c0591f;">$0.05</div>
<div class="t" style="left:2853.70px;top:1678.78px;font:400 23px/23px 'Liberation Mono', monospace;letter-spacing:-1.2px;color:#8b8b8b;">$27.49</div>
<div class="r" style="left:651px;top:1722px;width:2520px;height:2px;background:#9b968f;border-radius:0px;"></div>
<div class="t" style="left:671.70px;top:1749.63px;font:400 23.2px/23.2px 'Liberation Mono', monospace;letter-spacing:0px;color:#3d3d3d;">484</div>
<div class="t" style="left:830.20px;top:1749.63px;font:400 23.2px/23.2px 'Liberation Mono', monospace;letter-spacing:0px;color:#3d3d3d;">12:17:45 PM</div>
<div class="r" style="left:1199px;top:1736px;width:155px;height:44px;background:#d4d2ce;border:2px solid #9b968f;border-radius:8px;"></div>
<div class="t" style="left:1214.00px;top:1749.55px;font:400 22px/22px 'Liberation Mono', monospace;letter-spacing:-0.8px;color:#6e6e6e;">c-opus-4-6</div>
<div class="t" style="left:1572.70px;top:1749.63px;font:400 23.2px/23.2px 'Liberation Mono', monospace;letter-spacing:0px;color:#3d3d3d;">3</div>
<div class="t" style="left:1783.70px;top:1749.63px;font:400 23.2px/23.2px 'Liberation Mono', monospace;letter-spacing:0px;color:#3d3d3d;">3</div>
<div class="t" style="left:2018.70px;top:1749.63px;font:400 23.2px/23.2px 'Liberation Mono', monospace;letter-spacing:0px;color:#3d3d3d;">347</div>
<div class="t" style="left:2331.20px;top:1749.63px;font:400 23.2px/23.2px 'Liberation Mono', monospace;letter-spacing:0px;color:#3d3d3d;">91.7K</div>
<div class="t" style="left:2643.20px;top:1750.03px;font:400 23.2px/23.2px 'Liberation Mono', monospace;letter-spacing:0px;color:#c0591f;-webkit-text-stroke:0.55px #c0591f;">$0.05</div>
<div class="t" style="left:2853.70px;top:1749.78px;font:400 23px/23px 'Liberation Mono', monospace;letter-spacing:-1.2px;color:#8b8b8b;">$27.44</div>
<div class="r" style="left:651px;top:1793px;width:2520px;height:2px;background:#9b968f;border-radius:0px;"></div>
<div class="t" style="left:671.70px;top:1820.63px;font:400 23.2px/23.2px 'Liberation Mono', monospace;letter-spacing:0px;color:#3d3d3d;">483</div>
<div class="t" style="left:830.20px;top:1820.63px;font:400 23.2px/23.2px 'Liberation Mono', monospace;letter-spacing:0px;color:#3d3d3d;">12:17:24 PM</div>
<div class="r" style="left:1199px;top:1807px;width:155px;height:44px;background:#d4d2ce;border:2px solid #9b968f;border-radius:8px;"></div>
<div class="t" style="left:1214.00px;top:1820.55px;font:400 22px/22px 'Liberation Mono', monospace;letter-spacing:-0.8px;color:#6e6e6e;">c-opus-4-6</div>
<div class="t" style="left:1572.70px;top:1820.63px;font:400 23.2px/23.2px 'Liberation Mono', monospace;letter-spacing:0px;color:#3d3d3d;">1</div>
<div class="t" style="left:1783.70px;top:1820.63px;font:400 23.2px/23.2px 'Liberation Mono', monospace;letter-spacing:0px;color:#3d3d3d;">1</div>
<div class="t" style="left:2018.70px;top:1820.63px;font:400 23.2px/23.2px 'Liberation Mono', monospace;letter-spacing:0px;color:#3d3d3d;">287</div>
<div class="t" style="left:2331.20px;top:1820.63px;font:400 23.2px/23.2px 'Liberation Mono', monospace;letter-spacing:0px;color:#3d3d3d;">91.4K</div>
<div class="t" style="left:2643.20px;top:1821.03px;font:400 23.2px/23.2px 'Liberation Mono', monospace;letter-spacing:0px;color:#c0591f;-webkit-text-stroke:0.55px #c0591f;">$0.05</div>
<div class="t" style="left:2853.70px;top:1820.78px;font:400 23px/23px 'Liberation Mono', monospace;letter-spacing:-1.2px;color:#8b8b8b;">$27.40</div>
<div class="r" style="left:651px;top:1864px;width:2520px;height:2px;background:#9b968f;border-radius:0px;"></div>
<div class="t" style="left:671.70px;top:1891.63px;font:400 23.2px/23.2px 'Liberation Mono', monospace;letter-spacing:0px;color:#3d3d3d;">482</div>
<div class="t" style="left:830.20px;top:1891.63px;font:400 23.2px/23.2px 'Liberation Mono', monospace;letter-spacing:0px;color:#3d3d3d;">12:17:17 PM</div>
<div class="r" style="left:1199px;top:1878px;width:155px;height:44px;background:#d4d2ce;border:2px solid #9b968f;border-radius:8px;"></div>
<div class="t" style="left:1214.00px;top:1891.55px;font:400 22px/22px 'Liberation Mono', monospace;letter-spacing:-0.8px;color:#6e6e6e;">c-opus-4-6</div>
<div class="t" style="left:1572.70px;top:1891.63px;font:400 23.2px/23.2px 'Liberation Mono', monospace;letter-spacing:0px;color:#3d3d3d;">1</div>
<div class="t" style="left:1783.70px;top:1891.63px;font:400 23.2px/23.2px 'Liberation Mono', monospace;letter-spacing:0px;color:#3d3d3d;">1</div>
<div class="t" style="left:2018.70px;top:1891.63px;font:400 23.2px/23.2px 'Liberation Mono', monospace;letter-spacing:0px;color:#3d3d3d;">647</div>
<div class="t" style="left:2331.20px;top:1891.63px;font:400 23.2px/23.2px 'Liberation Mono', monospace;letter-spacing:0px;color:#3d3d3d;">90.8K</div>
<div class="t" style="left:2643.20px;top:1892.03px;font:400 23.2px/23.2px 'Liberation Mono', monospace;letter-spacing:0px;color:#c0591f;-webkit-text-stroke:0.55px #c0591f;">$0.05</div>
<div class="t" style="left:2853.70px;top:1891.78px;font:400 23px/23px 'Liberation Mono', monospace;letter-spacing:-1.2px;color:#8b8b8b;">$27.35</div>
<div class="r" style="left:651px;top:1935px;width:2520px;height:2px;background:#9b968f;border-radius:0px;"></div>
</div></body></html>
